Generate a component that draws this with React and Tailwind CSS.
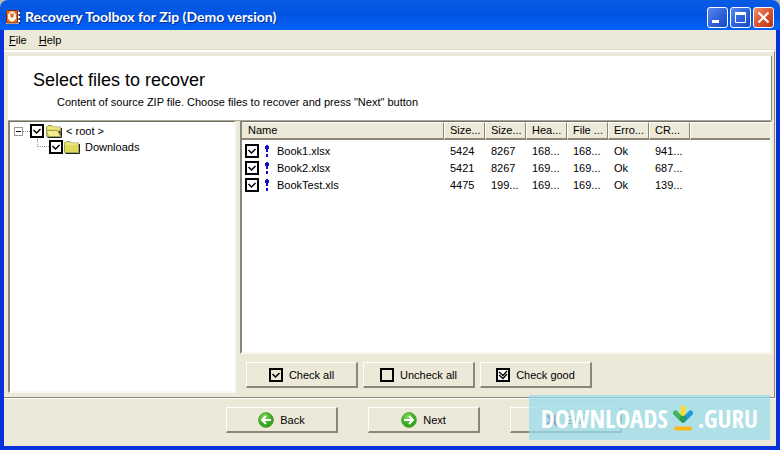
import React, { useState } from 'react';

const columns = ['Size...', 'Size...', 'Hea...', 'File ...', 'Erro...', 'CR...'];

const files = [
  { name: 'Book1.xlsx', cells: ['5424', '8267', '168...', '168...', 'Ok', '941...'] },
  { name: 'Book2.xlsx', cells: ['5421', '8267', '169...', '169...', 'Ok', '687...'] },
  { name: 'BookTest.xls', cells: ['4475', '199...', '169...', '169...', 'Ok', '139...'] }
];

const TickBox = ({ label, checked, onChange }) => (
  <span className="relative block size-3.5 shrink-0">
    <input
      type="checkbox"
      aria-label={label}
      checked={checked}
      onChange={onChange}
      className="block size-3.5 appearance-none border-2 border-black bg-white"
    />
    {checked && (
      <svg viewBox="0 0 14 14" className="pointer-events-none absolute inset-0 size-3.5">
        <path d="M3.500 6l3 3 4-4" fill="none" stroke="#000" strokeWidth="1.500" />
      </svg>
    )}
  </span>
);

const BoxGlyph = ({ kind }) => (
  <svg viewBox="0 0 14 14" className="size-3.5">
    <path d="M1 1h12v12h-12z" fill={kind === 'good' ? '#fff' : '#ece9d8'} stroke="#000" strokeWidth="2" />
    {kind === 'all' && (
      <path d="M3.500 6l3 3 4-4" fill="none" stroke="#000" strokeWidth="1.500" />
    )}
    {kind === 'good' && (
      <path d="M3 4l4 3.500L11 3M3 7l4 3.500L11 6" fill="none" stroke="#000" strokeWidth="1.300" />
    )}
  </svg>
);

const Folder = ({ open }) => (
  <svg viewBox="0 0 16 14" className="h-3.5 w-4 shrink-0">
    <path d="M.5 12.500v-9.500l1.500-1.500h4l1.500 1.500h7v9.500z" fill="#dedb5c" stroke="#a5a355" />
    <path d="M1.500 4h12.500" stroke="#f8f5a8" />
    <path d="M15.500 4v9.500h-14" fill="none" stroke="#222" />
    {open && (
      <>
        <path d="M12 7h2.500v5z" fill="#333" />
        <path d="M.5 6.500h11l3 6h-12z" fill="#f1ed8b" stroke="#a5a355" />
      </>
    )}
  </svg>
);

const ArrowGlyph = ({ back }) => (
  <svg viewBox="0 0 16 16" className="size-4">
    <defs>
      <radialGradient id={back ? 'green-back' : 'green-next'} cx="40%" cy="30%">
        <stop offset="0" stopColor="#86de56" />
        <stop offset="1" stopColor="#34a51e" />
      </radialGradient>
    </defs>
    <circle cx="8" cy="8" r="7.400" fill={back ? 'url(#green-back)' : 'url(#green-next)'} stroke="#4a9a3a" strokeWidth=".8" />
    <path
      d={back ? 'M13 8h-8.500M8 4L4 8 8 12' : 'M3 8h8.500M8 4L12 8 8 12'}
      fill="none"
      stroke="#fff"
      strokeWidth="2"
    />
  </svg>
);

const PushButton = ({ icon, children, onClick }) => (
  <button
    type="button"
    onClick={onClick}
    className="flex h-[26px] w-28 items-center justify-center gap-1.5 border-t border-r-2 border-b-2 border-l border-t-white border-r-[#8a8778] border-b-[#8a8778] border-l-white bg-[#ece9d8]"
  >
    {icon}
    <span>{children}</span>
  </button>
);

const CaptionButton = ({ label, red, children }) => (
  <button
    type="button"
    aria-label={label}
    className={`size-[21px] rounded-[3px] border border-white bg-linear-to-br ${red ? 'from-[#ef8d6c] via-[#dc5230] to-[#b93413]' : 'from-[#5c86ea] via-[#3064dc] to-[#1648c4]'}`}
  >
    <svg viewBox="0 0 19 19" className="size-full">{children}</svg>
  </button>
);

const TitleBar = () => (
  <header className="flex h-[30px] items-center rounded-t-lg bg-linear-to-b from-[#0a5be4] via-[#0054e3] to-[#0363f8] px-1 pt-1">
    <svg viewBox="0 0 16 16" className="ml-0.5 size-4">
      <path d="M0 1h14v14h-14z" fill="#fff" />
      <path d="M.5 1.500h11v12.500h-11z" fill="#e8702a" stroke="#7a2d16" />
      <path d="M2 5.500l2.500-3h3l2.500 3v4l-2.500 3h-3l-2.500-3z" fill="#fff2e0" />
      <path d="M4.500 3.500l1.500 2 1.500-2v4l-1.500 1.500-1.500-1.500z" fill="#e0601e" />
      <path d="M13.500 1v14" stroke="#1a2c66" strokeWidth="2" strokeDasharray="2 2" />
    </svg>
    <h1 className="ml-[3px] flex-1 font-['Lato',sans-serif] text-sm font-bold text-white [text-shadow:1px_1px_#0a2f8c]">
      Recovery Toolbox for Zip (Demo version)
    </h1>
    <div className="flex gap-0.5 pr-0.5">
      <CaptionButton label="Minimize">
        <path d="M4 12h7v3h-7z" fill="#fff" />
      </CaptionButton>
      <CaptionButton label="Maximize">
        <path d="M4.500 5v9.500h10v-9.500" fill="none" stroke="#fff" />
        <path d="M4 4h11v3h-11z" fill="#fff" />
      </CaptionButton>
      <CaptionButton label="Close" red>
        <path d="M4.500 4.500l10 10M14.500 4.500l-10 10" stroke="#fff" strokeWidth="2.200" />
      </CaptionButton>
    </div>
  </header>
);

const Watermark = () => (
  <div className="pointer-events-none absolute right-1.5 bottom-1.5 flex h-[45px] w-[241px] items-center justify-center bg-[#9bdbec]/75 font-['Open_Sans_Condensed','Roboto_Condensed',Roboto,sans-serif] text-[25px] font-bold text-white">
    <span>DOWNLOADS</span>
    <svg viewBox="0 0 22 26" className="mx-1 h-[26px] w-[22px] shrink-0">
      <g strokeLinecap="round" strokeWidth="5">
        <path d="M11 3v11" stroke="#fddc25" />
        <path d="M3.500 8l7 7" stroke="#41b55b" />
        <path d="M18.500 8l-7 7" stroke="#1a9be0" />
        <path d="M10 13.500l1 1 1-1" stroke="#2f9a50" fill="none" />
        <path d="M4 23.500h14" stroke="#fdb515" strokeWidth="4" />
      </g>
    </svg>
    <span>.GURU</span>
  </div>
);

export default function App() {
  const [tree, setTree] = useState({ root: true, downloads: true });
  const [selected, setSelected] = useState([true, true, true]);

  const toggleFile = (index) => setSelected(selected.map((v, i) => (i === index ? !v : v)));
  const setAll = (value) => setSelected(files.map(() => value));

  return (
    <div className="flex min-h-screen flex-col bg-[#b9b9b4] font-['Liberation_Sans',Arial,sans-serif] text-[11px] leading-4 text-black">
      <TitleBar />
      <div className="relative flex flex-1 flex-col border-x-4 border-b-4 border-[#0831d9] bg-[#ece9d8]">
        <nav className="flex h-5 items-center gap-3 border-b border-[#dedac8] px-[5px]">
          <button type="button"><u>F</u>ile</button>
          <button type="button"><u>H</u>elp</button>
        </nav>

        <div className="mr-px flex flex-1 flex-col border-t-2 border-r border-b border-t-white border-r-[#8a8778] border-b-[#8a8778] pt-1 pr-0.5 pl-1">
          <section className="h-16 border-r border-[#8a8778] bg-white pt-3 pl-[25px]">
            <h2 className="text-lg leading-6">Select files to recover</h2>
            <p className="pt-0.5 pl-6 leading-4">Content of source ZIP file. Choose files to recover and press "Next" button</p>
          </section>

          <main className="flex flex-1 gap-1 border-t border-[#aca899]">
            <ul className="mb-1 w-[228px] shrink-0 border-t border-r-2 border-b-2 border-l-2 border-t-[#716f64] border-r-[#f8f7f0] border-b-[#f8f7f0] border-l-[#8a8778] bg-white pt-px">
              <li className="flex h-4 items-center pl-1">
                <button type="button" aria-label="Collapse root" className="grid size-[9px] place-items-center border border-[#9a9a9a]">
                  <span className="h-px w-[5px] bg-black" />
                </button>
                <span className="w-[7px] border-t border-dotted border-[#999]" />
                <TickBox label="root" checked={tree.root} onChange={() => setTree({ ...tree, root: !tree.root })} />
                <span className="ml-0.5"><Folder open /></span>
                <span className="ml-1">&lt; root &gt;</span>
              </li>
              <li className="flex h-4 items-center pl-[27px]">
                <span className="mb-2 h-2 w-3 border-b border-l border-dotted border-[#999]" />
                <TickBox label="Downloads" checked={tree.downloads} onChange={() => setTree({ ...tree, downloads: !tree.downloads })} />
                <span className="ml-px"><Folder /></span>
                <span className="ml-[5px]">Downloads</span>
              </li>
            </ul>

            <div className="flex min-w-0 flex-1 flex-col">
              <div className="flex-1 border-t border-r-2 border-b-2 border-l-2 border-t-[#716f64] border-r-[#f8f7f0] border-b-[#f8f7f0] border-l-[#8a8778] bg-white">
                <table className="w-full table-fixed border-separate border-spacing-0 text-left">
                  <thead>
                    <tr className="h-[18px] bg-[#ece9d8]">
                      <th className="w-[202px] border-t border-r border-b-2 border-t-white border-r-[#8a8778] border-b-[#8a8778] p-0 pl-1.5 font-normal leading-[15px]">Name</th>
                      {columns.map((c, i) => (
                        <th key={i} className="w-[41px] border-t border-r border-b-2 border-l border-t-white border-r-[#8a8778] border-b-[#8a8778] border-l-white p-0 pl-[5px] font-normal leading-[15px] whitespace-nowrap">{c}</th>
                      ))}
                      <th className="border-t border-b-2 border-l border-t-white border-b-[#8a8778] border-l-white p-0" />
                    </tr>
                  </thead>
                  <tbody>
                    <tr className="h-0.5"><td colSpan={8} className="p-0" /></tr>
                    {files.map((file, index) => (
                      <tr key={file.name} className="h-[17px]">
                        <td className="p-0 pl-[3px]">
                          <div className="flex items-center">
                            <TickBox label={file.name} checked={selected[index]} onChange={() => toggleFile(index)} />
                            <svg viewBox="0 0 4 12" className="ml-1.5 h-3 w-1">
                              <path d="M0 1h1v-1h2v1h1v3h-1v3h-2v-3h-1zM1 9h2v3h-2z" fill="#1010c8" />
                            </svg>
                            <span className="ml-2">{file.name}</span>
                          </div>
                        </td>
                        {file.cells.map((cell, i) => (
                          <td key={i} className="p-0 pl-1.5 leading-4 whitespace-nowrap">{cell}</td>
                        ))}
                        <td />
                      </tr>
                    ))}
                  </tbody>
                </table>
              </div>
              <div className="flex h-[43px] gap-[5px] pt-2 pl-1.5">
                <PushButton icon={<BoxGlyph kind="all" />} onClick={() => setAll(true)}>Check all</PushButton>
                <PushButton icon={<BoxGlyph kind="none" />} onClick={() => setAll(false)}>Uncheck all</PushButton>
                <PushButton icon={<BoxGlyph kind="good" />} onClick={() => setAll(true)}>Check good</PushButton>
              </div>
            </div>
          </main>
        </div>

        <footer className="flex h-12 justify-end gap-[30px] border-t border-white pt-2 pr-[154px]">
          <PushButton icon={<ArrowGlyph back />}>Back</PushButton>
          <PushButton icon={<ArrowGlyph />}>Next</PushButton>
          <PushButton
            icon={
              <svg viewBox="0 0 14 14" className="size-3.5">
                <path d="M2 2l10 10M12 2L2 12" stroke="#6b1426" strokeWidth="4" />
              </svg>
            }
          >
            Exit
          </PushButton>
        </footer>
        <Watermark />
      </div>
    </div>
  );
}
